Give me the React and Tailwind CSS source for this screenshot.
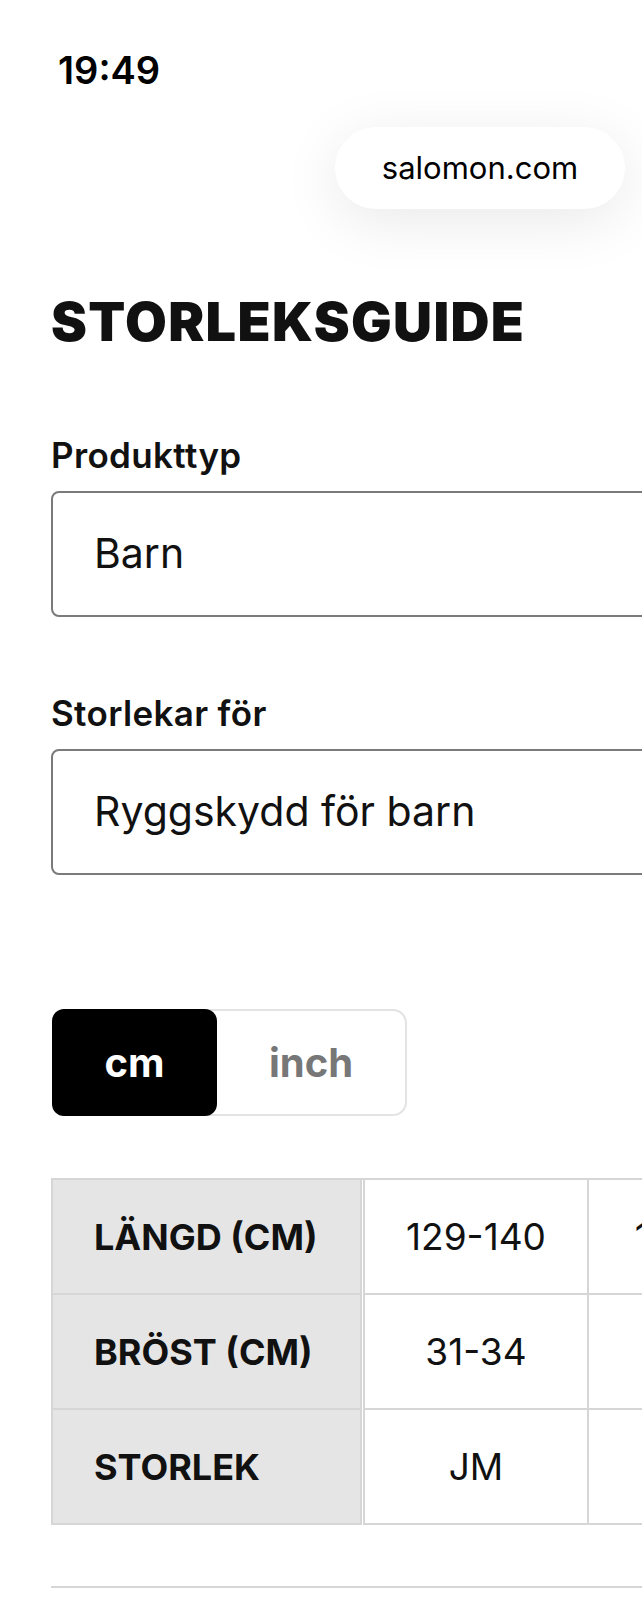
import React from "react";

const rows = [
  { label: "LÄNGD (CM)", values: ["129-140", "141-152", "153-164"] },
  { label: "BRÖST (CM)", values: ["31-34", "35-38", "39-42"] },
  { label: "STORLEK", values: ["JM", "JL", "JXL"] },
];

const SelectBox = ({ label, value, className }) => (
  <div className={className}>
    <div className="pl-[51px] text-[35px] leading-[40px] font-semibold tracking-[0.01em] text-[#111]">{label}</div>
    <div className="ml-[51px] mt-[16px] flex h-[126px] w-[700px] items-center rounded-[8px] border-2 border-[#7a7a7a] pl-[41px]">
      <span className="text-[41px] text-[#111]">{value}</span>
    </div>
  </div>
);

export default function App() {
  return (
    <div className="min-h-[1600px] w-[642px] overflow-hidden bg-white pt-[48px] font-['Inter','Noto_Sans',sans-serif] text-[#111]">
      {/* status bar */}
      <div className="pl-[58px] text-[38px] leading-[44px] font-semibold text-black">19:49</div>

      {/* url pill */}
      <div className="mt-[35px] flex justify-end pr-[17px]">
        <div className="flex h-[82px] w-[290px] items-center justify-center rounded-full bg-white text-[31px] text-black shadow-[0_12px_60px_rgba(0,0,0,0.09)]">
          salomon.com
        </div>
      </div>

      <h1 className="mt-[83px] pl-[51px] text-[54px] leading-[60px] font-black tracking-[0.025em] text-[#111]">
        STORLEKSGUIDE
      </h1>

      <SelectBox className="mt-[83px]" label="Produkttyp" value="Barn" />
      <SelectBox className="mt-[76px]" label="Storlekar för" value="Ryggskydd för barn" />

      {/* unit toggle */}
      <div className="ml-[52px] mt-[134px] flex h-[107px] w-[355px] rounded-[14px] border-2 border-[#e3e3e3]">
        <div className="-my-[2px] -ml-[2px] flex w-[165px] items-center justify-center rounded-[12px] bg-black text-[40px] font-bold text-white">
          cm
        </div>
        <div className="flex flex-1 items-center justify-center text-[40px] font-bold text-[#777]">inch</div>
      </div>

      {/* size table */}
      <div className="ml-[51px] mt-[62px] w-[1100px] border-t-2 border-[#d6d6d6]">
        {rows.map((row) => (
          <div key={row.label} className="flex h-[115px]">
            <div className="flex w-[311px] shrink-0 items-center border-b-2 border-l-2 border-r-2 border-[#d6d6d6] bg-[#e5e5e5] pl-[41px] text-[36px] font-bold text-[#111]">
              {row.label}
            </div>
            <div className="ml-[1px] flex">
              {row.values.map((v, i) => (
                <div
                  key={i}
                  className={`flex w-[224px] shrink-0 items-center justify-center border-b-2 border-r-2 border-[#d6d6d6] text-[37px] text-[#111] ${
                    i === 0 ? "w-[226px] border-l-2" : ""
                  }`}
                >
                  {v}
                </div>
              ))}
            </div>
          </div>
        ))}
      </div>

      <div className="ml-[51px] mt-[61px] h-[2px] w-[700px] bg-[#d6d6d6]" />
    </div>
  );
}
